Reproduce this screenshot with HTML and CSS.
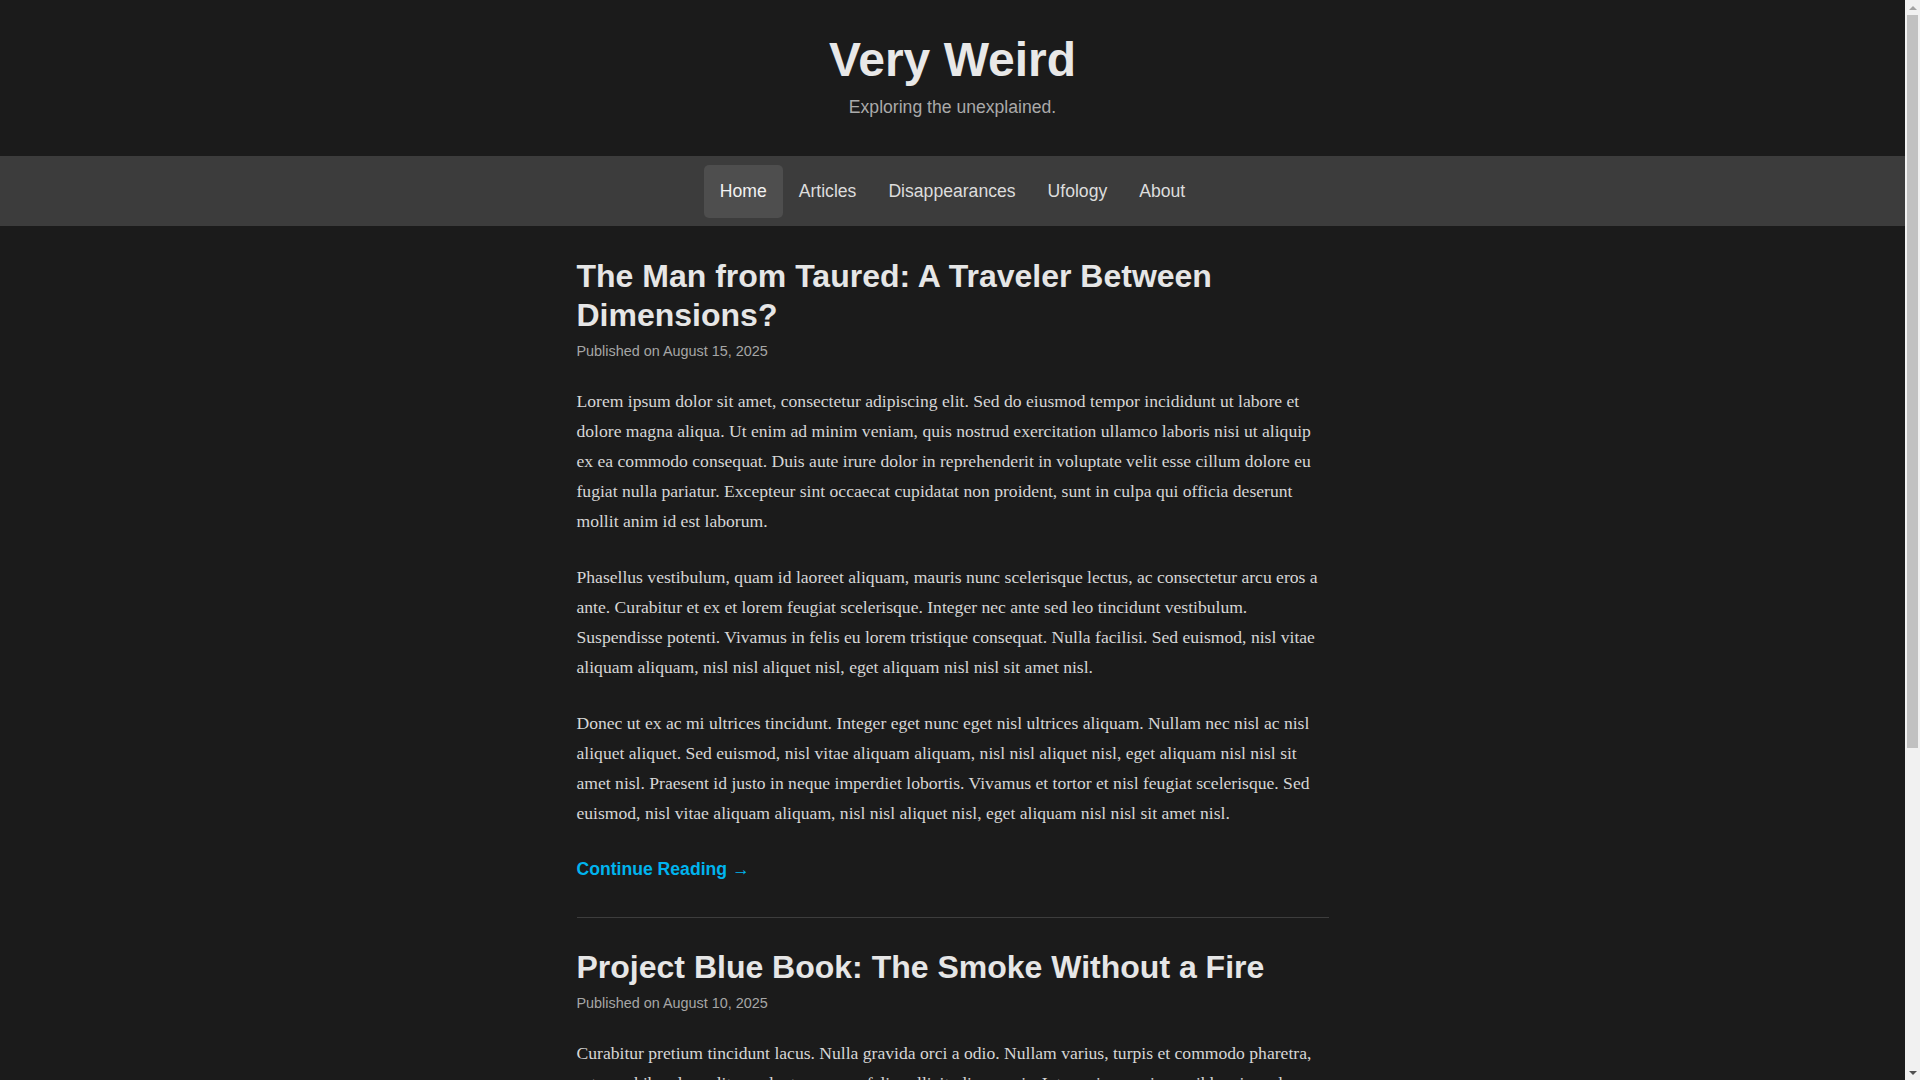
FILE: index.html
```html
<!DOCTYPE html>
<html lang="en">
<head>
<meta charset="utf-8">
<title>Very Weird</title>
<link rel="stylesheet" href="styles.css">
</head>
<body>
<div class="page">
<header class="site-header">
  <h1 class="site-title">Very Weird</h1>
  <p class="site-tagline">Exploring the unexplained.</p>
</header>
<nav class="site-nav">
  <ul class="nav-list">
    <li><a class="nav-link active" href="#">Home</a></li>
    <li><a class="nav-link" href="#">Articles</a></li>
    <li><a class="nav-link" href="#">Disappearances</a></li>
    <li><a class="nav-link" href="#">Ufology</a></li>
    <li><a class="nav-link" href="#">About</a></li>
  </ul>
</nav>
<main class="content">
  <article class="post">
    <h2 class="post-title">The Man from Taured: A Traveler Between Dimensions?</h2>
    <div class="post-meta">Published on August 15, 2025</div>
    <div class="post-body">
      <p>Lorem ipsum dolor sit amet, consectetur adipiscing elit. Sed do eiusmod tempor incididunt ut labore et dolore magna aliqua. Ut enim ad minim veniam, quis nostrud exercitation ullamco laboris nisi ut aliquip ex ea commodo consequat. Duis aute irure dolor in reprehenderit in voluptate velit esse cillum dolore eu fugiat nulla pariatur. Excepteur sint occaecat cupidatat non proident, sunt in culpa qui officia deserunt mollit anim id est laborum.</p>
      <p>Phasellus vestibulum, quam id laoreet aliquam, mauris nunc scelerisque lectus, ac consectetur arcu eros a ante. Curabitur et ex et lorem feugiat scelerisque. Integer nec ante sed leo tincidunt vestibulum. Suspendisse potenti. Vivamus in felis eu lorem tristique consequat. Nulla facilisi. Sed euismod, nisl vitae aliquam aliquam, nisl nisl aliquet nisl, eget aliquam nisl nisl sit amet nisl.</p>
      <p>Donec ut ex ac mi ultrices tincidunt. Integer eget nunc eget nisl ultrices aliquam. Nullam nec nisl ac nisl aliquet aliquet. Sed euismod, nisl vitae aliquam aliquam, nisl nisl aliquet nisl, eget aliquam nisl nisl sit amet nisl. Praesent id justo in neque imperdiet lobortis. Vivamus et tortor et nisl feugiat scelerisque. Sed euismod, nisl vitae aliquam aliquam, nisl nisl aliquet nisl, eget aliquam nisl nisl sit amet nisl.</p>
    </div>
    <div class="read-more"><a href="#">Continue Reading →</a></div>
  </article>
  <article class="post">
    <h2 class="post-title">Project Blue Book: The Smoke Without a Fire</h2>
    <div class="post-meta">Published on August 10, 2025</div>
    <div class="post-body">
      <p>Curabitur pretium tincidunt lacus. Nulla gravida orci a odio. Nullam varius, turpis et commodo pharetra, est eros bibendum elit, nec luctus magna felis sollicitudin mauris. Integer in mauris eu nibh euismod gravida. Duis ac tellus et risus vulputate vehicula. Donec lobortis risus a elit. Etiam tempor. Ut ullamcorper, ligula eu tempor congue, eros est euismod turpis, id tincidunt sapien risus a quam.</p>
      <p>Maecenas fermentum consequat mi. Donec fermentum. Pellentesque malesuada nulla a mi. Duis sapien sem, aliquet nec, commodo eget, consequat quis, neque. Aliquam faucibus, elit ut dictum aliquet, felis nisl adipiscing sapien, sed malesuada diam lacus eget erat. Cras mollis scelerisque nunc. Nullam arcu. Aliquam consequat. Curabitur augue lorem, dapibus quis, laoreet et, pretium ac, nisi.</p>
    </div>
    <div class="read-more"><a href="#">Continue Reading →</a></div>
  </article>
</main>
<footer class="site-footer">
  <p>&copy; 2025 Very Weird. All rights reserved.</p>
</footer>
</div>
<aside class="scrollbar" aria-hidden="true">
  <div class="sb-btn"><span class="sb-arrow-up"></span></div>
  <div class="sb-track"><div class="sb-thumb"></div></div>
  <div class="sb-btn"><span class="sb-arrow-down"></span></div>
</aside>
</body>
</html>
```

FILE: styles.css
```css
html, body {
  margin: 0;
  padding: 0;
  height: 100%;
  overflow: hidden;
}

body {
  display: flex;
  background: #1b1b1b;
  color: #d8d8d8;
  font-family: "Liberation Sans", Arial, sans-serif;
  font-size: 16px;
}

.page {
  flex: 1;
  min-width: 0;
  height: 100vh;
  overflow-y: auto;
  scrollbar-width: none;
}

.page::-webkit-scrollbar {
  display: none;
}

/* classic scrollbar look */
.scrollbar {
  flex: none;
  width: 15px;
  height: 100vh;
  background: #f1f1f1;
  display: flex;
  flex-direction: column;
}

.sb-btn {
  height: 15px;
  flex: none;
  display: flex;
  align-items: center;
  justify-content: center;
}

.sb-arrow-up {
  width: 0;
  height: 0;
  border-left: 4px solid transparent;
  border-right: 4px solid transparent;
  border-bottom: 4px solid #a3a3a3;
}

.sb-arrow-down {
  width: 0;
  height: 0;
  border-left: 4px solid transparent;
  border-right: 4px solid transparent;
  border-top: 4px solid #505050;
}

.sb-track {
  flex: 1;
  padding: 0 2px;
}

.sb-thumb {
  height: 733px;
  background: #c1c1c1;
}

.site-header {
  text-align: center;
  padding: 33px 0 39px;
}

.site-title {
  margin: 0 0 10px;
  font-size: 48px;
  font-weight: bold;
  line-height: 54px;
  color: #e8e8e8;
}

.site-tagline {
  margin: 0;
  font-size: 17.6px;
  line-height: 20px;
  color: #aaaaaa;
}

.site-nav {
  background: #3c3c3c;
  padding: 9px 0 8px;
}

.nav-list {
  list-style: none;
  margin: 0;
  padding: 0;
  display: flex;
  justify-content: center;
}

.nav-link {
  display: block;
  padding: 16px;
  font-size: 17.6px;
  line-height: 21px;
  color: #dddddd;
  text-decoration: none;
  border-radius: 5px;
}

.nav-link.active {
  background: #4e4e4e;
  color: #f2f2f2;
}

.content {
  max-width: 752px;
  margin: 0 auto;
  padding: 31px 0 0;
}

.post {
  padding-bottom: 32px;
  margin-bottom: 30px;
  border-bottom: 1px solid #3d3d3d;
}

.post-title {
  margin: 0 0 8px;
  font-size: 32px;
  font-weight: bold;
  line-height: 1.22;
  color: #e6e6e6;
}

.post-meta {
  font-size: 14.4px;
  line-height: normal;
  color: #a6a6a6;
  margin-bottom: 28px;
}

.post-body p {
  margin: 0 0 26.4px;
  font-family: "Liberation Serif", "Times New Roman", serif;
  font-size: 17.6px;
  line-height: 1.7;
  color: #d6d6d6;
}

.read-more {
  font-size: 17.6px;
  line-height: 1.7;
}

.read-more a {
  color: #00b4ee;
  font-weight: bold;
  text-decoration: none;
}

.site-footer {
  background: #3c3c3c;
  text-align: center;
  padding: 36px 0;
}

.site-footer p {
  margin: 0;
  font-size: 14.4px;
  color: #aaaaaa;
}
```
